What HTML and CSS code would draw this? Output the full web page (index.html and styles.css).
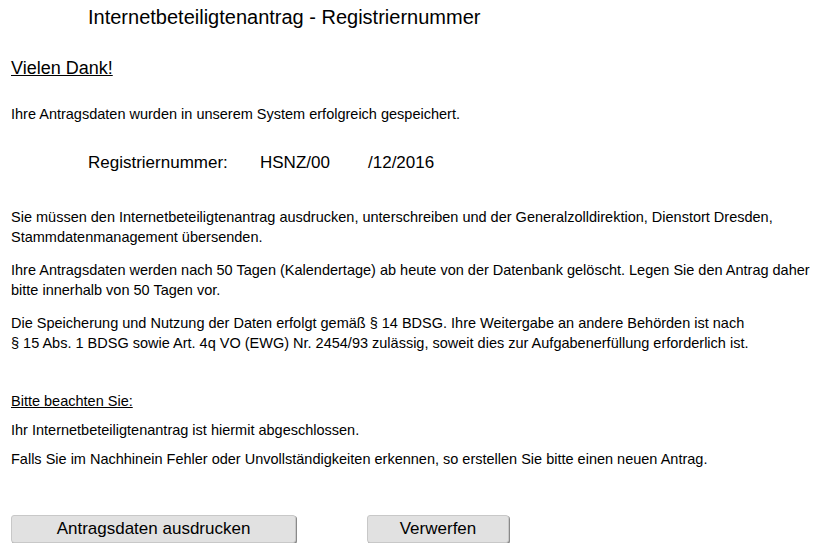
FILE: index.html
```html
<!DOCTYPE html>
<html lang="de">
<head>
    <meta charset="UTF-8">
    <meta name="viewport" content="width=device-width, initial-scale=1.0">
    <title>Internetbeteiligtenantrag - Registriernummer</title>
    <link rel="stylesheet" href="styles.css">
</head>
<body>
    <header class="page-title">
        <h1>Internetbeteiligtenantrag - Registriernummer</h1>
    </header>
    <main class="content">
        <h2 class="thanks">Vielen Dank!</h2>
        <p class="saved">Ihre Antragsdaten wurden in unserem System erfolgreich gespeichert.</p>

        <div class="reg-row">
            <span class="reg-label">Registriernummer:</span>
            <span class="reg-prefix">HSNZ/00</span>
            <span class="reg-suffix">/12/2016</span>
        </div>

        <section class="info">
            <p>Sie müssen den Internetbeteiligtenantrag ausdrucken, unterschreiben und der Generalzolldirektion, Dienstort Dresden,<br>Stammdatenmanagement übersenden.</p>
            <p>Ihre Antragsdaten werden nach 50 Tagen (Kalendertage) ab heute von der Datenbank gelöscht. Legen Sie den Antrag daher<br>bitte innerhalb von 50 Tagen vor.</p>
            <p>Die Speicherung und Nutzung der Daten erfolgt gemäß § 14 BDSG. Ihre Weitergabe an andere Behörden ist nach<br>§ 15 Abs. 1 BDSG sowie Art. 4q VO (EWG) Nr. 2454/93 zulässig, soweit dies zur Aufgabenerfüllung erforderlich ist.</p>
        </section>

        <section class="notice">
            <p class="notice-title">Bitte beachten Sie:</p>
            <p>Ihr Internetbeteiligtenantrag ist hiermit abgeschlossen.</p>
            <p>Falls Sie im Nachhinein Fehler oder Unvollständigkeiten erkennen, so erstellen Sie bitte einen neuen Antrag.</p>
        </section>

        <div class="actions">
            <button class="btn btn-print">Antragsdaten ausdrucken</button>
            <button class="btn btn-discard">Verwerfen</button>
        </div>
    </main>
</body>
</html>
```

FILE: styles.css
```css
body {
    font-family: "Liberation Sans", Arial, sans-serif;
    margin: 0;
    padding: 0;
    background: #fff;
    color: #000;
}
.page-title h1 {
    margin: 0;
    padding: 6px 0 0 88px;
    font-size: 20px;
    font-weight: normal;
    line-height: 23px;
}
.content {
    padding: 0 0 0 11px;
}
.thanks {
    margin: 29px 0 0 0;
    font-size: 18px;
    font-weight: normal;
    text-decoration: underline;
    line-height: 20px;
}
p {
    margin: 0;
    font-size: 14.5px;
    line-height: 20px;
    white-space: nowrap;
}
.saved {
    margin-top: 26px;
}
.reg-row {
    display: flex;
    margin: 29px 0 0 77px;
    font-size: 17px;
    line-height: 20px;
}
.reg-label {
    width: 172px;
}
.reg-prefix {
    width: 108px;
}
.info {
    margin-top: 34px;
}
.info p + p {
    margin-top: 13px;
}
.notice {
    margin-top: 38px;
}
.notice-title {
    text-decoration: underline;
}
.notice p + p {
    margin-top: 9px;
}
.actions {
    display: flex;
    gap: 71px;
    margin-top: 46px;
}
.btn {
    height: 28px;
    padding: 0;
    font-family: "Liberation Sans", Arial, sans-serif;
    font-size: 17px;
    color: #000;
    background: #e1e1e1;
    border: 1px solid #c8c8c8;
    border-radius: 3px;
    box-shadow: 1px 1px 0 #8a8a8a;
    cursor: pointer;
}
.btn-print {
    width: 285px;
}
.btn-discard {
    width: 142px;
}
```
